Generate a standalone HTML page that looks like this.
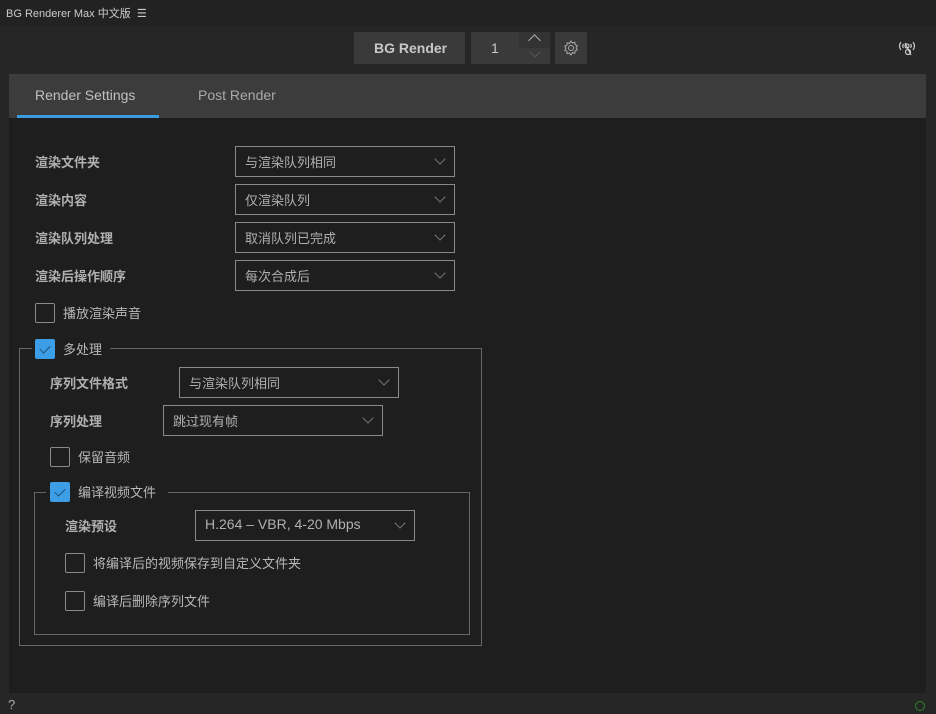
<!DOCTYPE html>
<html><head><meta charset="utf-8"><style>
*{margin:0;padding:0;box-sizing:border-box}
body{width:936px;height:714px;background:#262626;font-family:"Liberation Sans","Noto Sans CJK SC",sans-serif;color:#b8b8b8;position:relative;overflow:hidden;font-size:13px}
.a{position:absolute}
.title{left:0;top:0;width:936px;height:27px;background:#222;font-size:11px;color:#ccc;padding:5px 0 0 6px}
.btn{background:#3a3a3a;color:#c8c8c8}
.panel{left:9px;top:118px;width:917px;height:575px;background:#1e1e1e}
.tabs{left:9px;top:74px;width:917px;height:44px;background:#3c3c3c}
.lbl{font-weight:bold;color:#b0b0b0;font-size:13px}
.dd{border:1px solid #8a8a8a;height:31px;width:220px;padding:5px 9px;color:#b0b0b0;font-size:13px}
.dd:after{content:"";position:absolute;right:10px;top:8px;width:7px;height:7px;border-right:1px solid #777;border-bottom:1px solid #777;transform:rotate(45deg)}
.cb{width:20px;height:20px;border:1px solid #8a8a8a;border-radius:2px}
.cb.on{background:#3d9ee8;border-color:#3d9ee8}
.cb.on:after{content:"";position:absolute;left:6px;top:3px;width:5px;height:9px;border-right:1px solid #1e4f78;border-bottom:1px solid #1e4f78;transform:rotate(45deg)}
.ct{color:#b8b8b8;font-size:13px}
.grp{border:1px solid #666}
</style></head><body>
<div class="a title">BG Renderer Max 中文版 &nbsp;☰</div>
<div class="a btn" style="left:354px;top:32px;width:111px;height:32px;font-weight:bold;font-size:14px;padding:8px 0 0 20px">BG Render</div>
<div class="a btn" style="left:471px;top:32px;width:79px;height:32px;font-size:14px;padding:8px 0 0 20px">1</div>
<div class="a" style="left:519px;top:32px;width:31px;height:16px;background:#333"></div>
<div class="a" style="left:530px;top:36px;width:9px;height:9px;border-left:1px solid #aaa;border-top:1px solid #aaa;transform:rotate(45deg)"></div>
<div class="a" style="left:531px;top:48px;width:8px;height:8px;border-right:1px solid #555;border-bottom:1px solid #555;transform:rotate(45deg)"></div>
<div class="a btn" style="left:555px;top:32px;width:32px;height:32px"></div>
<svg class="a" style="left:562px;top:39px" width="18" height="18" viewBox="0 0 18 18"><circle cx="9" cy="9" r="2.5" fill="none" stroke="#aaa"/><path d="M9 2l1.5 2 2.3-.7.3 2.4 2.2 1-1.2 2 1.2 2.1-2.2 1-.3 2.4-2.3-.7L9 16l-1.5-2-2.3.7-.3-2.4-2.2-1L4 9.3 2.7 7.2l2.2-1 .3-2.4 2.3.7z" fill="none" stroke="#aaa"/></svg>
<svg class="a" style="left:898px;top:40px" width="18" height="16" viewBox="0 0 18 16"><path d="M3 2Q0 6 3 10M5.5 4Q4 6 5.5 8M15 2q3 4 0 8M12.5 4q1.5 2 0 4" fill="none" stroke="#ccc" stroke-width="1.2"/><circle cx="9" cy="6" r="2" fill="none" stroke="#ccc" stroke-width="1.2"/><circle cx="10" cy="12" r="2.5" fill="none" stroke="#ccc" stroke-width="1.2"/><path d="M7 3l6 12" stroke="#ccc" stroke-width="1.2"/></svg>
<div class="a tabs"></div>
<div class="a" style="left:35px;top:87px;font-size:14px;color:#c0c0c0">Render Settings</div>
<div class="a" style="left:17px;top:115px;width:142px;height:3px;background:#3a9be0"></div>
<div class="a" style="left:198px;top:87px;font-size:14px;color:#aaa">Post Render</div>
<div class="a panel"></div>

<div class="a lbl" style="left:35px;top:152px">渲染文件夹</div>
<div class="a dd" style="left:235px;top:146px">与渲染队列相同</div>
<div class="a lbl" style="left:35px;top:190px">渲染内容</div>
<div class="a dd" style="left:235px;top:184px">仅渲染队列</div>
<div class="a lbl" style="left:35px;top:228px">渲染队列处理</div>
<div class="a dd" style="left:235px;top:222px">取消队列已完成</div>
<div class="a lbl" style="left:35px;top:266px">渲染后操作顺序</div>
<div class="a dd" style="left:235px;top:260px">每次合成后</div>
<div class="a cb" style="left:35px;top:303px"></div>
<div class="a ct" style="left:63px;top:303px">播放渲染声音</div>

<div class="a grp" style="left:19px;top:348px;width:463px;height:298px"></div>
<div class="a" style="left:32px;top:338px;width:78px;height:20px;background:#1e1e1e"></div>
<div class="a cb on" style="left:35px;top:339px"></div>
<div class="a ct" style="left:63px;top:339px">多处理</div>
<div class="a lbl" style="left:50px;top:373px">序列文件格式</div>
<div class="a dd" style="left:179px;top:367px">与渲染队列相同</div>
<div class="a lbl" style="left:50px;top:411px">序列处理</div>
<div class="a dd" style="left:163px;top:405px">跳过现有帧</div>
<div class="a cb" style="left:50px;top:447px"></div>
<div class="a ct" style="left:78px;top:447px">保留音频</div>

<div class="a grp" style="left:34px;top:492px;width:436px;height:143px"></div>
<div class="a" style="left:46px;top:481px;width:122px;height:20px;background:#1e1e1e"></div>
<div class="a cb on" style="left:50px;top:482px"></div>
<div class="a ct" style="left:78px;top:482px">编译视频文件</div>
<div class="a lbl" style="left:65px;top:516px">渲染预设</div>
<div class="a dd" style="left:195px;top:510px;font-size:14px">H.264 – VBR, 4-20 Mbps</div>
<div class="a cb" style="left:65px;top:553px"></div>
<div class="a ct" style="left:93px;top:553px">将编译后的视频保存到自定义文件夹</div>
<div class="a cb" style="left:65px;top:591px"></div>
<div class="a ct" style="left:93px;top:591px">编译后删除序列文件</div>

<div class="a" style="left:8px;top:697px;font-size:13px;color:#aaa">?</div>
<div class="a" style="left:915px;top:701px;width:10px;height:10px;border:1px solid #2a8a2a;border-radius:50%"></div>
</body></html>
